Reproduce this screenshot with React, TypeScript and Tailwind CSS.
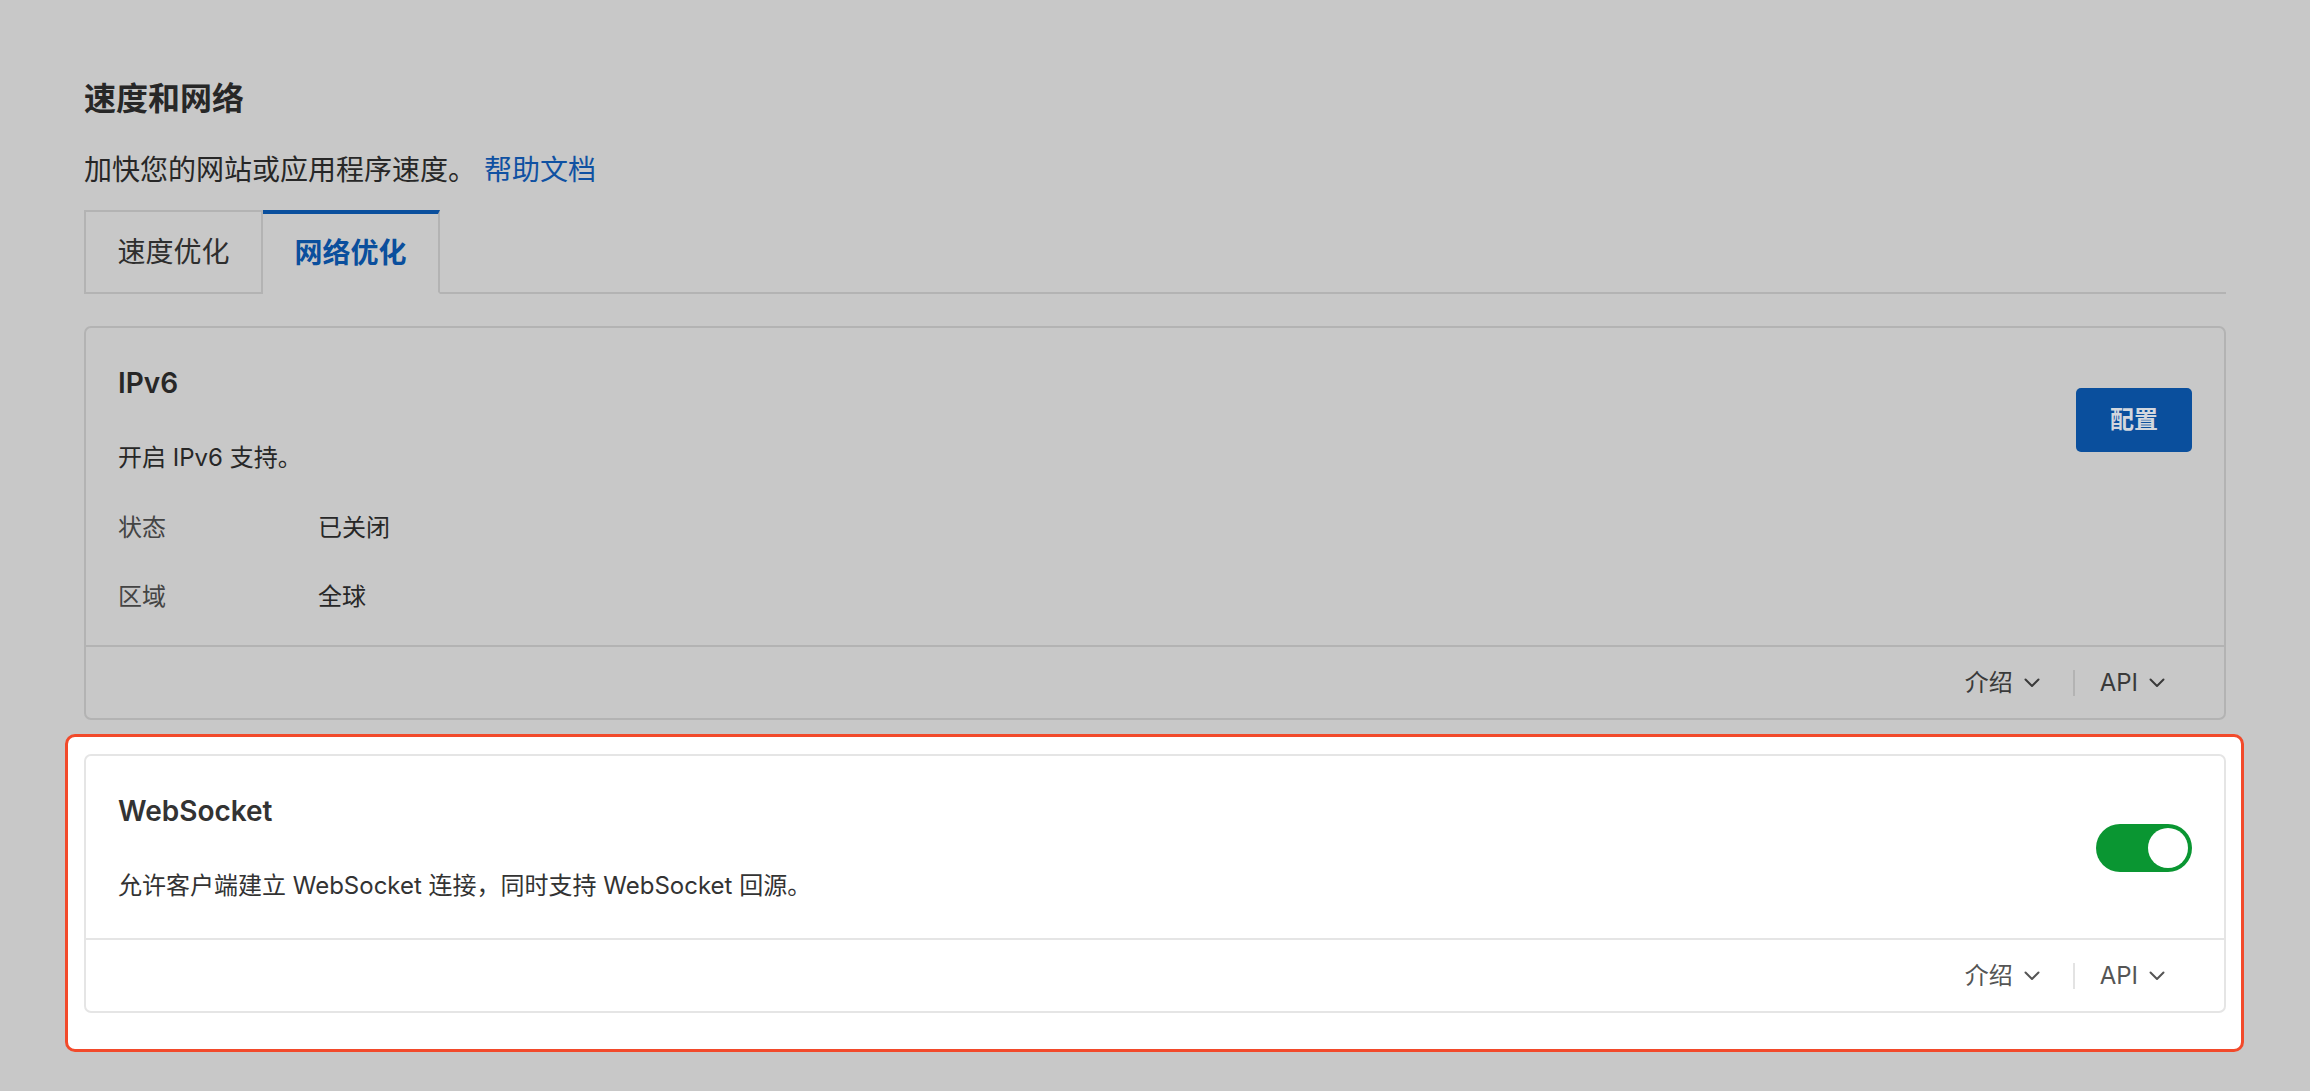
import { ReactNode } from "react";

const font = "font-['Inter','Noto_Sans_CJK_SC',sans-serif]";

type Row = {
  label: string;
  value: string;
};

const Chevron = ({ color }: { color: string }) => (
  <svg width="16" height="10" viewBox="0 0 16 10" fill="none" className="ml-[11px]">
    <path d="M1.5 1.5 8 8l6.5-6.5" stroke={color} strokeWidth="2" strokeLinecap="round" strokeLinejoin="round" />
  </svg>
);

const CardFooter = ({ dim }: { dim: boolean }) => {
  const text = dim ? "text-[#3a3a3a]" : "text-[#555555]";
  const line = dim ? "bg-[#b3b3b3]" : "bg-[#e3e3e3]";
  const border = dim ? "border-[#b3b3b3]" : "border-[#e5e5e5]";
  return (
    <div className={`flex h-[73px] items-center justify-end border-t-2 pr-[59px] text-[24px] ${border} ${text}`}>
      <button className="flex items-center">
        <span>介绍</span>
        <Chevron color={dim ? "#3a3a3a" : "#555555"} />
      </button>
      <div className={`ml-[33px] mr-[25px] h-[26px] w-[2px] ${line}`} />
      <button className="flex items-center">
        <span>API</span>
        <Chevron color={dim ? "#3a3a3a" : "#555555"} />
      </button>
    </div>
  );
};

const Card = ({
  title,
  desc,
  action,
  rows,
  dim,
}: {
  title: string;
  desc: string;
  action: ReactNode;
  rows?: Row[];
  dim: boolean;
}) => {
  const border = dim ? "border-[#b3b3b3]" : "border-[#e5e5e5]";
  const strong = dim ? "text-[#272727]" : "text-[#333333]";
  return (
    <div className={`rounded-[7px] border-2 ${border} ${dim ? "bg-[#c8c8c8]" : "bg-white"}`}>
      <div className={`px-[32px] pt-[35px] ${rows ? "pb-[30px]" : "pb-[34px]"}`}>
        <div className="flex items-center justify-between">
          <div>
            <h3 className={`text-[28px] font-semibold leading-[40px] ${strong}`}>{title}</h3>
            <p className={`mt-[37px] text-[24px] leading-[36px] ${strong}`}>{desc}</p>
          </div>
          {action}
        </div>
        {rows?.map((row, i) => (
          <div key={row.label} className={`flex text-[24px] leading-[36px] ${i === 0 ? "mt-[34px]" : "mt-[33px]"}`}>
            <span className="w-[200px] text-[#444444]">{row.label}</span>
            <span className={strong}>{row.value}</span>
          </div>
        ))}
      </div>
      <CardFooter dim={dim} />
    </div>
  );
};

const Toggle = () => (
  <button className="flex h-[48px] w-[96px] items-center justify-end rounded-full bg-[#0a9632] p-[4px]">
    <span className="h-[40px] w-[40px] rounded-full bg-white" />
  </button>
);

const App = () => {
  const ipv6Rows: Row[] = [
    { label: "状态", value: "已关闭" },
    { label: "区域", value: "全球" },
  ];

  return (
    <div className={`min-h-screen bg-[#c8c8c8] px-[84px] pt-[77px] pb-[39px] ${font}`}>
      <h1 className="text-[32px] font-semibold leading-[44px] text-[#272727]">速度和网络</h1>
      <p className="mt-[29px] text-[28px] leading-[40px] text-[#272727]">
        加快您的网站或应用程序速度。
        <a className="ml-[8px] text-[#0f51a2]">帮助文档</a>
      </p>

      <div className="mt-[20px] flex h-[84px] border-b-2 border-[#b3b3b3]">
        <button className="flex w-[179px] items-center justify-center border-x-2 border-t-2 border-[#b3b3b3] text-[28px] text-[#2e2e2e]">
          速度优化
        </button>
        <button className="-mb-[2px] flex w-[177px] items-center justify-center border-t-4 border-r-2 border-b-2 border-t-[#0a4f9d] border-r-[#b3b3b3] border-b-[#c8c8c8] text-[28px] font-semibold text-[#0a4f9d]">
          网络优化
        </button>
      </div>

      <div className="mt-[32px]">
        <Card
          dim
          title="IPv6"
          desc="开启 IPv6 支持。"
          rows={ipv6Rows}
          action={
            <button className="h-[64px] w-[116px] rounded-[5px] bg-[#0a4f9d] text-[24px] font-semibold text-[#d2d7de]">
              配置
            </button>
          }
        />
      </div>

      <div className="-ml-[19px] -mr-[18px] mt-[14px] rounded-[10px] border-[3px] border-[#f24a2b] bg-white pt-[17px] pr-[15px] pb-[36px] pl-[16px]">
        <Card
          dim={false}
          title="WebSocket"
          desc="允许客户端建立 WebSocket 连接，同时支持 WebSocket 回源。"
          action={<Toggle />}
        />
      </div>
    </div>
  );
};

export default App;
